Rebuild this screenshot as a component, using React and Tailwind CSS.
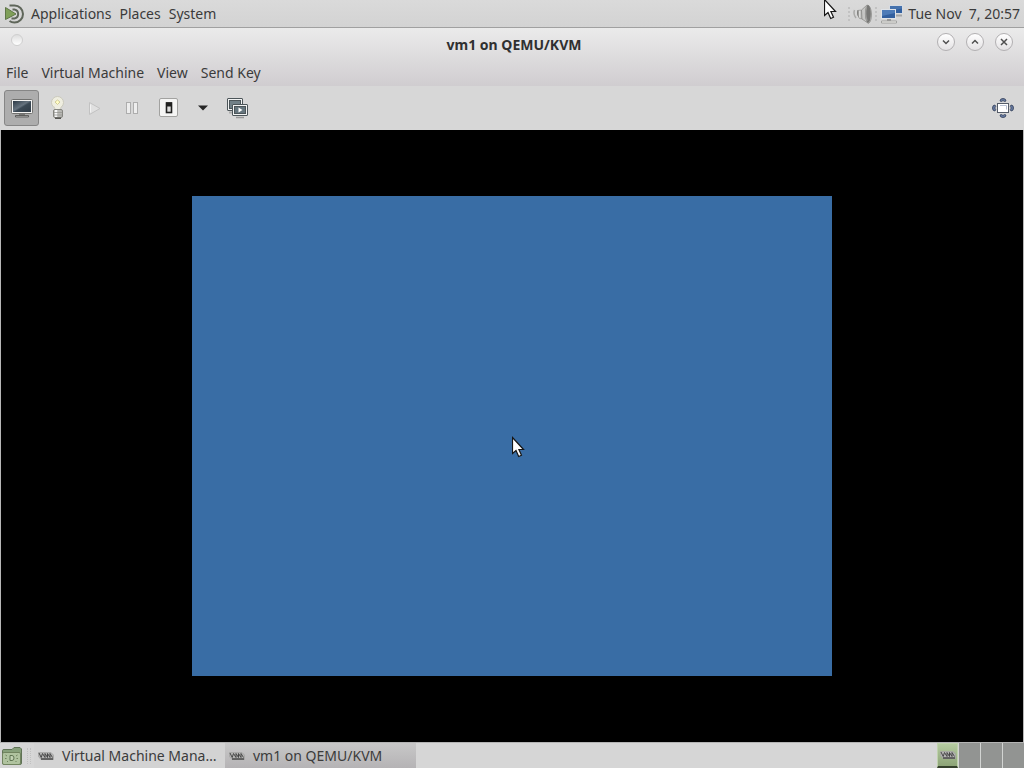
import React from "react";

function MateLogo() {
  return (
    <svg width="22" height="22" viewBox="0 0 22 22" fill="none" aria-hidden="true">
      <path d="M5.500 2.500 H10.500 A8.300 8.300 0 0 1 10.500 19.500 Q7.500 19.500 5.500 18" stroke="#5f665a" strokeWidth="2" />
      <path d="M8.500 6.500 H10.500 A4.600 4.600 0 0 1 10.500 15.500 H7.500" stroke="#5f665a" strokeWidth="2" />
      <path d="M1.500 4.500 L12 11 L1.500 16.500 Z" fill="#7f9f58" stroke="#5f7547" strokeWidth="1" />
    </svg>
  );
}

function SpeakerIcon() {
  return (
    <svg width="32" height="24" viewBox="0 0 32 24" aria-hidden="true">
      <defs>
        <linearGradient id="cone" x1="0" x2="1">
          <stop offset="0" stopColor="#4f4f4d" />
          <stop offset="0.400" stopColor="#dededc" />
          <stop offset="1" stopColor="#8a8a88" />
        </linearGradient>
      </defs>
      <path d="M1 5v15M28 5v15" stroke="#c2c2c2" strokeWidth="2" strokeDasharray="2 2" />
      <path d="M6.500 8 Q5 12 8 16" fill="none" stroke="#aaaaa8" strokeWidth="1.500" />
      <path d="M9.500 8.500 Q8.500 13 11.500 16.500 L15 17 L13.500 8 Z" fill="url(#cone)" stroke="#848482" strokeWidth="0.600" />
      <path d="M13.500 8 L19 3 Q23 3.500 23.500 12 Q23.500 19.500 20.500 21.500 L14 17 Z" fill="#c6c6c4" stroke="#858583" strokeWidth="0.700" />
      <ellipse cx="20" cy="12" rx="2.800" ry="9" fill="#777775" />
      <path d="M18.500 5 Q16.500 12 19 19" fill="none" stroke="#9c9c9a" strokeWidth="1.500" />
    </svg>
  );
}

function NetworkIcon() {
  return (
    <svg width="24" height="22" viewBox="0 0 24 22" aria-hidden="true">
      <rect x="9.500" y="2.500" width="13" height="8" fill="#315f9f" stroke="#d6dbe2" />
      <path d="M10 3h12v2.500L10 8z" fill="#4572ad" />
      <path d="M16 12.500h6" stroke="#a3a5a6" strokeWidth="2" />
      <rect x="1.500" y="6.500" width="14" height="9" fill="#315f9f" stroke="#dfe3e8" />
      <path d="M2 7h13v3L2 13z" fill="#4d7bb8" />
      <path d="M7 16h4v2H7z" fill="#999" />
      <path d="M1.500 18h15v2h-15z" fill="#eeeeec" stroke="#949593" strokeWidth="0.800" />
    </svg>
  );
}

function Cursor() {
  return (
    <svg width="14" height="23" viewBox="0 0 14 23" aria-hidden="true">
      <path
        d="M0.500 1.500 V17.500 L4 14.500 L6.700 20.500 L9.500 19.300 L6.900 13.500 H11.500 Z"
        fill="#fff"
        stroke="#161616"
        strokeWidth="1.200"
      />
    </svg>
  );
}

function MonitorIcon() {
  return (
    <svg width="24" height="24" viewBox="0 0 24 24" aria-hidden="true">
      <defs>
        <linearGradient id="screen" x1="0" y1="0" x2="1" y2="1">
          <stop offset="0" stopColor="#2c3945" />
          <stop offset="0.450" stopColor="#66737f" />
          <stop offset="0.550" stopColor="#3b4955" />
          <stop offset="1" stopColor="#303c47" />
        </linearGradient>
      </defs>
      <rect x="1.500" y="3.500" width="21" height="14" rx="1" fill="#f4f4f3" stroke="#71716f" />
      <rect x="3" y="5" width="18" height="11" fill="url(#screen)" />
      <path d="M9 18h6v2H9z" fill="#777775" />
      <path d="M5.500 19.500h13v1.500h-13z" fill="#b8b8b6" stroke="#4d4d4b" strokeWidth="0.800" />
    </svg>
  );
}

function BulbIcon() {
  return (
    <svg width="24" height="24" viewBox="0 0 24 24" aria-hidden="true">
      <circle cx="11.500" cy="6.500" r="6" fill="#efeee0" stroke="#cac9bc" />
      <path d="M8 10.500 Q9.500 13 9 15h5q-.500-2 1.500-4.500" fill="#efeee2" stroke="#cbcaba" strokeWidth="0.800" />
      <path d="M9 6l2.500 2.500L14 6l-2.500-2z" fill="#fffdc6" stroke="#c8c28a" strokeWidth="0.800" />
      <rect x="7.500" y="13.500" width="9" height="8" rx="1.500" fill="#b8b8b4" stroke="#858580" />
      <path d="M10 14v7" stroke="#f7f7f7" strokeWidth="2.500" />
      <path d="M8 16.500h8M8 19h8" stroke="#90908c" strokeWidth="0.700" />
      <path d="M9 21.500h6v1.500H9z" fill="#565653" />
    </svg>
  );
}

function PlayIcon() {
  return (
    <svg width="24" height="24" viewBox="0 0 24 24" aria-hidden="true">
      <path d="M6.500 6.500 L17 12.500 L6.500 18.500 Z" fill="#e0e0e0" stroke="#c2c2c2" />
      <path d="M7.500 8.500v8" stroke="#f2f2f2" />
    </svg>
  );
}

function PauseIcon() {
  return (
    <svg width="24" height="24" viewBox="0 0 24 24" aria-hidden="true">
      <rect x="6.500" y="6.500" width="4" height="11" fill="#ededed" stroke="#adadad" />
      <rect x="13.500" y="6.500" width="4" height="11" fill="#ededed" stroke="#adadad" />
    </svg>
  );
}

function PowerIcon() {
  return (
    <svg width="24" height="24" viewBox="0 0 24 24" aria-hidden="true">
      <rect x="2.500" y="2.500" width="18" height="18" rx="1.500" fill="#f5f5f4" stroke="#a2a2a0" />
      <rect x="9.500" y="7" width="5" height="9.500" fill="#dededd" stroke="#20201f" strokeWidth="1.600" />
      <path d="M9 6.500h6v4H9z" fill="#20201f" />
    </svg>
  );
}

function SnapshotIcon() {
  return (
    <svg width="24" height="24" viewBox="0 0 24 24" aria-hidden="true">
      <path d="M4 15.500h4v2H4z" fill="#aaa" />
      <rect x="2.500" y="2.500" width="15" height="12" rx="0.500" fill="#f2f3f3" stroke="#4c5559" />
      <rect x="4.500" y="4.500" width="11" height="8" fill="#718087" stroke="#4c5559" />
      <rect x="7.500" y="8.500" width="15" height="11" rx="0.500" fill="#f2f3f3" stroke="#4c5559" />
      <rect x="9.500" y="10.500" width="11" height="7" fill="#65757d" stroke="#4c5559" />
      <path d="M13.500 11.500l4 2.500-4 2.500z" fill="#fff" />
      <path d="M11 21.500h8" stroke="#999" strokeWidth="1.500" />
    </svg>
  );
}

function FullscreenIcon() {
  return (
    <svg width="24" height="24" viewBox="0 0 24 24" aria-hidden="true">
      <g fill="#6579a3" stroke="#3d4961" strokeWidth="0.900">
        <path d="M9 5 Q9 2.500 12 2.500 Q15 2.500 15 5 L13.500 5.500 L12 4.500 L10.500 5.500 Z" />
        <path d="M9 19 Q9 21.500 12 21.500 Q15 21.500 15 19 L13.500 18.500 L12 19.500 L10.500 18.500 Z" />
        <path d="M4 9 Q1.500 9 1.500 12 Q1.500 15 4 15 L4.700 13.500 L3.700 12 L4.700 10.500 Z" />
        <path d="M20 9 Q22.500 9 22.500 12 Q22.500 15 20 15 L19.300 13.500 L20.300 12 L19.300 10.500 Z" />
      </g>
      <rect x="6.500" y="7.500" width="11" height="9" fill="#fff" stroke="#555c68" />
      <path d="M9 9.500h6.500v4" fill="none" stroke="#b6bfd1" />
    </svg>
  );
}

function FolderIcon() {
  return (
    <svg width="22" height="22" viewBox="0 0 22 22" aria-hidden="true">
      <path d="M2.500 5.500 Q2.500 4.500 4 4.500h8l2-2h6l1.500 1.500v14q0 1.500-1.500 1.500H4Q2.500 19.500 2.500 18z" fill="#87a07a" stroke="#607356" />
      <rect x="2.500" y="7.500" width="18" height="12" rx="1.500" fill="#b0c39f" stroke="#71845f" />
      <path d="M10 10.500h2q2 0 2 2.500t-2 2.500h-2z" fill="#c3d2b4" stroke="#5f7452" />
      <path d="M5.500 10l1.500 1M5 13.500h1.500M7 17l1-1M17.500 10l-1.500 1M18 13.500h-1.500M16.500 17l-1-1" stroke="#71845f" />
    </svg>
  );
}

function VmmIcon() {
  return (
    <svg width="16" height="16" viewBox="0 0 16 16" aria-hidden="true">
      <path d="M0.500 4.500h12.500l2.500 2.500v4.500H3L0.500 8.500z" fill="#b5b5b4" stroke="#a2a2a1" strokeWidth="0.700" />
      <path d="M1 5l2.200 4.500L4.500 5.500 7 9.500V5.500L9.500 9.500V5.500L12 9.500V5.500L14.500 9.500" fill="none" stroke="#484848" strokeWidth="1" />
      <path d="M3 11h12" stroke="#4a4a4a" strokeWidth="1.500" />
    </svg>
  );
}

function WindowButton({ label, path }) {
  return (
    <button
      type="button"
      aria-label={label}
      className="flex size-[18px] items-center justify-center rounded-full border border-[#b2b0b2] bg-gradient-to-b from-white to-[#e4e2e4]"
    >
      <svg width="10" height="10" viewBox="0 0 10 10" fill="none" stroke="#505050" strokeWidth="1.500" aria-hidden="true">
        <path d={path} />
      </svg>
    </button>
  );
}

function ToolButton({ label, active = false, children }) {
  return (
    <button
      type="button"
      aria-label={label}
      className={
        active
          ? "flex h-9 w-[35px] items-center justify-center rounded-[3px] border border-[#868686] bg-[#adadad]"
          : "flex size-9 items-center justify-center"
      }
    >
      {children}
    </button>
  );
}

function Handle() {
  return <span aria-hidden="true" className="h-4 w-1 border-x border-dotted border-[#c0c0c0]" />;
}

const menus = ["File", "Virtual Machine", "View", "Send Key"];

export default function App() {
  return (
    <div className="flex min-h-screen flex-col bg-[#d6d6d6] font-['Noto_Sans','Open_Sans',sans-serif] text-sm leading-5 text-[#3b3b3b]">
      <header className="relative flex h-7 items-center justify-between border-b border-[#a0a0a0] bg-gradient-to-b from-[#dadada] to-[#d3d3d3] px-1">
        <nav className="flex items-center gap-2" aria-label="Desktop">
          <button type="button" className="flex items-center gap-[5px]">
            <MateLogo />
            Applications
          </button>
          <button type="button">Places</button>
          <button type="button">System</button>
        </nav>
        <div className="flex items-center">
          <button type="button" aria-label="Volume"><SpeakerIcon /></button>
          <button type="button" aria-label="Network" className="mr-1"><NetworkIcon /></button>
          <button type="button" className="whitespace-pre">Tue Nov  7, 20:57</button>
        </div>
        <div className="pointer-events-none absolute top-[-2px] right-[186px]"><Cursor /></div>
      </header>

      <main className="flex flex-1 flex-col">
        <div className="bg-gradient-to-b from-[#ebebeb] to-[#d0cdd0]">
          <div className="grid h-8 grid-cols-[1fr_auto_1fr] items-center px-2">
            <button
              type="button"
              aria-label="Window menu"
              className="mb-2 ml-[3px] size-3 rounded-full border border-[#cfcfcf] bg-gradient-to-b from-[#dedede] to-white"
            />
            <h1 className="pt-px pl-1 font-bold text-[#303030]">vm1 on QEMU/KVM</h1>
            <div className="mb-1 flex justify-end gap-[11px] pr-[3px]">
              <WindowButton label="Minimize" path="M2 3.500 L5 6.500 L8 3.500" />
              <WindowButton label="Maximize" path="M2 6.500 L5 3.500 L8 6.500" />
              <WindowButton label="Close" path="M2 2 L8 8 M8 2 L2 8" />
            </div>
          </div>
          <nav className="flex h-[26px] items-center gap-[13px] px-[6px]" aria-label="Window">
            {menus.map((name) => (
              <button type="button" key={name}>{name}</button>
            ))}
          </nav>
        </div>

        <div role="toolbar" aria-label="Virtual machine" className="flex h-11 items-center gap-px bg-[#d7d7d7] pr-[3px] pl-1">
          <ToolButton label="Show the graphical console" active><MonitorIcon /></ToolButton>
          <ToolButton label="Show virtual hardware details"><BulbIcon /></ToolButton>
          <ToolButton label="Run"><PlayIcon /></ToolButton>
          <ToolButton label="Pause"><PauseIcon /></ToolButton>
          <ToolButton label="Shut down"><PowerIcon /></ToolButton>
          <button type="button" aria-label="Shut down options" className="flex h-9 w-[30px] items-center justify-center">
            <svg width="10" height="6" viewBox="0 0 10 6" aria-hidden="true"><path d="M0 0.500h10L5 5.500z" fill="#252525" /></svg>
          </button>
          <ToolButton label="Manage snapshots"><SnapshotIcon /></ToolButton>
          <div className="ml-auto"><ToolButton label="Full screen"><FullscreenIcon /></ToolButton></div>
        </div>

        <section aria-label="Console" className="flex flex-1 items-center justify-center border-x border-[#b8b8b8] bg-black">
          <div className="relative aspect-[4/3] w-[640px] max-w-full bg-[#396da5]">
            <div className="pointer-events-none absolute top-1/2 left-1/2"><Cursor /></div>
          </div>
        </section>
      </main>

      <footer className="flex h-[26px] items-stretch border-t border-[#b4b4b4] bg-[#d6d6d6]">
        <button type="button" aria-label="Show desktop" className="flex w-6 items-center"><FolderIcon /></button>
        <span className="flex w-[10px] items-center justify-center"><Handle /></span>
        <button type="button" className="flex w-[191px] items-center gap-2 bg-[#d3d3d3] px-1 whitespace-nowrap">
          <VmmIcon />
          Virtual Machine Mana…
        </button>
        <button type="button" className="flex w-[191px] items-center gap-2 bg-gradient-to-b from-[#c8c8c8] to-[#b5b3b5] px-1 whitespace-nowrap">
          <VmmIcon />
          vm1 on QEMU/KVM
        </button>
        <div className="ml-auto flex gap-px bg-[#d2d4d2]">
          <button type="button" aria-label="Workspace 1" className="flex w-[21px] items-center justify-center border border-b-2 border-[#bfd2ad] border-b-[#34402b] bg-gradient-to-b from-[#b5cba0] to-[#8da477]">
            <VmmIcon />
          </button>
          <button type="button" aria-label="Workspace 2" className="w-[21px] bg-[#929492]" />
          <button type="button" aria-label="Workspace 3" className="w-[21px] bg-[#929492]" />
          <button type="button" aria-label="Workspace 4" className="w-[21px] bg-[#929492]" />
        </div>
      </footer>
    </div>
  );
}
